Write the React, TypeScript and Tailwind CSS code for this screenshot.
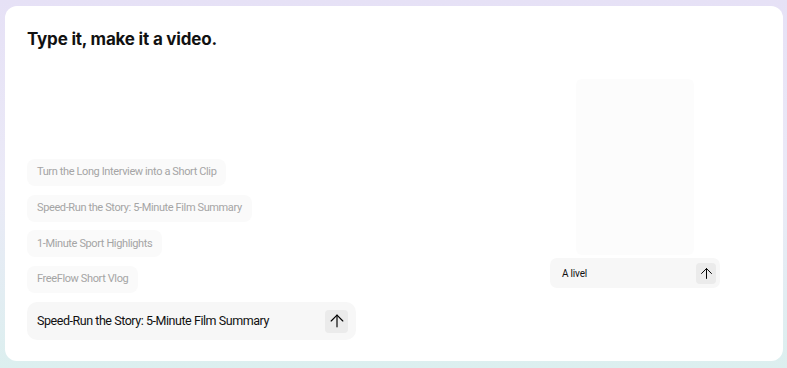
import { ArrowUp } from 'lucide-react';

const SUGGESTIONS = [
  'Turn the Long Interview into a Short Clip',
  'Speed-Run the Story: 5-Minute Film Summary',
  '1-Minute Sport Highlights',
  'FreeFlow Short Vlog',
];

export default function App() {
  return (
    <div
      className="h-[368px] w-full pt-[6px] pl-[5px] pr-[4px] pb-[7px] font-['Inter',sans-serif]"
      style={{ background: 'linear-gradient(180deg, #e6e1f6 0%, #ebeaf7 50%, #dcefef 100%)' }}
    >
      <div className="flex h-full rounded-[12px] bg-white px-[22px] pt-[21px] pb-[21px]">
        {/* left: heading + prompt suggestions */}
        <div className="flex w-[329px] flex-col justify-between">
          <h1 className="text-[17px] font-bold leading-[24px] tracking-[-0.2px] text-[#111]">
            Type it, make it a video.
          </h1>

          <div className="flex flex-col items-start">
            <div className="flex flex-col items-start gap-[8.7px]">
              {SUGGESTIONS.map((s) => (
                <div
                  key={s}
                  className="flex h-[27px] items-center rounded-[8px] bg-[#fafafa] px-[10px] font-['Roboto',sans-serif] text-[11px] tracking-[-0.38px] text-[#a5a5a5]"
                >
                  {s}
                </div>
              ))}
            </div>

            <div className="mt-[9px] flex h-[38px] w-[329px] items-center justify-between rounded-[10px] bg-[#f7f7f7] pl-[10px] pr-[8px]">
              <span className="font-['Roboto',sans-serif] text-[12.5px] tracking-[-0.45px] text-[#111]">
                Speed-Run the Story: 5-Minute Film Summary
              </span>
              <button className="flex h-[23px] w-[23px] items-center justify-center rounded-[4px] bg-[#ebebeb]">
                <ArrowUp className="h-[20px] w-[20px] text-black" strokeWidth={1.4} />
              </button>
            </div>
          </div>
        </div>

        {/* right: preview */}
        <div className="ml-auto mr-[41px] flex w-[170px] flex-col items-center self-center">
          <div className="h-[176px] w-[118px] rounded-[6px] bg-[#fcfcfc]" />
          <div className="mt-[3px] flex h-[30px] w-[170px] items-center justify-between rounded-[7px] bg-[#f7f7f7] pl-[12px] pr-[4px]">
            <span className="font-['Roboto',sans-serif] text-[10px] tracking-[-0.2px] text-[#111]">A livel</span>
            <button className="flex h-[21px] w-[20px] items-center justify-center rounded-[4px] bg-[#ebebeb]">
              <ArrowUp className="h-[17px] w-[17px] text-black" strokeWidth={1.4} />
            </button>
          </div>
        </div>
      </div>
    </div>
  );
}
